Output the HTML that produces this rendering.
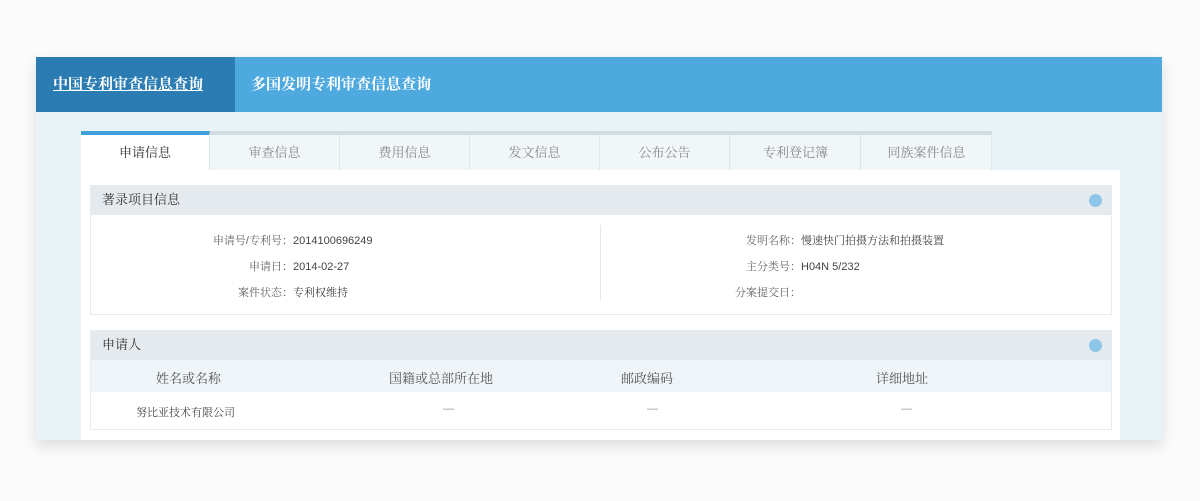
<!DOCTYPE html>
<html><head><meta charset="utf-8"><style>
*{margin:0;padding:0;box-sizing:border-box}
body{width:1200px;height:501px;background:#fbfbfb;font-family:"Liberation Sans","Noto Serif CJK SC","Noto Sans CJK SC",sans-serif;position:relative;overflow:hidden}
.card{position:absolute;left:36px;top:57px;width:1126px;height:383px;background:#e9f2f6;box-shadow:0 6px 14px rgba(0,0,0,.12)}
.hdr{height:55px;background:#4ea9df;position:relative}
.hdr .a{position:absolute;left:0;top:0;width:199px;height:55px;background:#2a7cb3;color:#fff;font-size:15px;font-weight:bold;line-height:55px;padding-left:17px;text-decoration:underline;white-space:nowrap}
.hdr .b{position:absolute;left:215px;top:0;color:#fff;font-size:15px;font-weight:bold;line-height:55px}
.tabs{position:absolute;left:45px;top:74px;width:911px;height:39px;border-top:4px solid #d2dbe2}
.tab{position:absolute;top:0;height:35px;width:130px;background:#f1f6f8;border-right:1px solid #dde6eb;color:#888;font-size:13px;text-align:center;line-height:35px}
.tab.on{background:#fff;color:#333;border-top:4px solid #3e9fd9;top:-4px;height:39px;width:129px}
.panel{position:absolute;left:45px;top:113px;width:1039px;height:270px;background:#fff}
.sh{position:absolute;left:9px;width:1022px;height:30px;background:#e5eaee;font-size:13px;color:#333;line-height:30px;padding-left:12px}
.sh i{position:absolute;right:10px;top:9px;width:13px;height:13px;border-radius:50%;background:#8ec6ea}
.sb{position:absolute;left:9px;width:1022px;border:1px solid #e5eaee;border-top:none}
.r{position:absolute;font-size:11px;color:#444;white-space:nowrap}
.r b{font-weight:normal;color:#666;display:inline-block;text-align:right}
</style></head><body>
<div class="card">
<div class="hdr"><div class="a">中国专利审查信息查询</div><div class="b">多国发明专利审查信息查询</div></div>
<div class="tabs">
<div class="tab on" style="left:0">申请信息</div>
<div class="tab" style="left:129px">审查信息</div>
<div class="tab" style="left:259px">费用信息</div>
<div class="tab" style="left:389px">发文信息</div>
<div class="tab" style="left:519px">公布公告</div>
<div class="tab" style="left:650px">专利登记簿</div>
<div class="tab" style="left:781px">同族案件信息</div>
</div>
<div class="panel">
<div class="sh" style="top:15px">著录项目信息<i></i></div>
<div class="sb" style="top:45px;height:100px">
<div style="position:absolute;left:509px;top:10px;width:1px;height:76px;background:#e6e6e6"></div>
<div class="r" style="left:70px;top:17px"><b style="width:132px">申请号/专利号：</b>2014100696249</div>
<div class="r" style="left:70px;top:43px"><b style="width:132px">申请日：</b>2014-02-27</div>
<div class="r" style="left:70px;top:69px"><b style="width:132px">案件状态：</b>专利权维持</div>
<div class="r" style="left:560px;top:17px"><b style="width:150px">发明名称：</b>慢速快门拍摄方法和拍摄装置</div>
<div class="r" style="left:560px;top:43px"><b style="width:150px">主分类号：</b>H04N 5/232</div>
<div class="r" style="left:560px;top:69px"><b style="width:150px">分案提交日：</b></div>
</div>
<div class="sh" style="top:160px">申请人<i></i></div>
<div class="sb" style="top:190px;height:70px">
<div style="position:absolute;left:0;top:0;width:1020px;height:32px;background:#eef4f7"></div>
<div class="r" style="left:65px;top:8px;font-size:13px;color:#555">姓名或名称</div>
<div class="r" style="left:298px;top:8px;font-size:13px;color:#555">国籍或总部所在地</div>
<div class="r" style="left:530px;top:8px;font-size:13px;color:#555">邮政编码</div>
<div class="r" style="left:785px;top:8px;font-size:13px;color:#555">详细地址</div>
<div class="r" style="left:45px;top:44px">努比亚技术有限公司</div>
<div class="r" style="left:352px;top:43px;color:#999">—</div>
<div class="r" style="left:556px;top:43px;color:#999">—</div>
<div class="r" style="left:810px;top:43px;color:#999">—</div>
</div>
</div>
</div>
</body></html>
